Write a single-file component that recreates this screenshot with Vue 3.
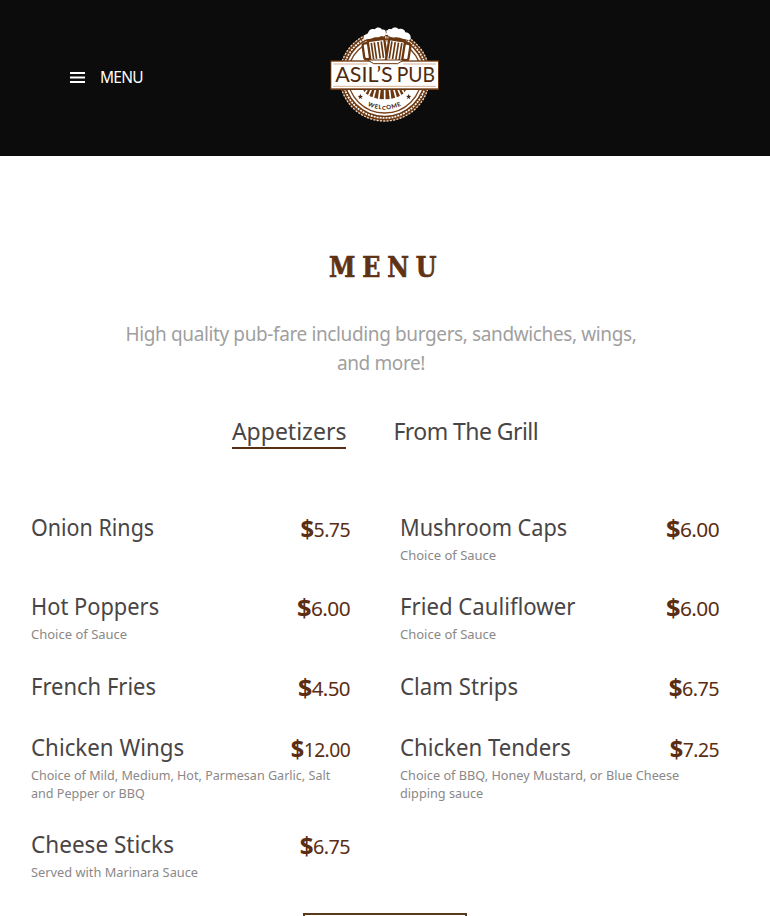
<script setup>
import { ref } from 'vue'

const activeTab = ref('Appetizers')
const tabs = [
  { label: 'Appetizers', spacing: 0 },
  { label: 'From The Grill', spacing: -0.55 },
]

// fit / priceFit / descFit: horizontal squeeze of each text
const items = [
  { name: 'Onion Rings', fit: 0.934, price: '5.75', priceFit: 0.95 },
  { name: 'Mushroom Caps', fit: 0.943, price: '6.00', priceFit: 1.02, desc: 'Choice of Sauce' },
  { name: 'Hot Poppers', fit: 0.95, price: '6.00', priceFit: 1.02, desc: 'Choice of Sauce' },
  { name: 'Fried Cauliflower', fit: 0.964, price: '6.00', priceFit: 1.02, desc: 'Choice of Sauce' },
  { name: 'French Fries', fit: 0.956, price: '4.50', priceFit: 1 },
  { name: 'Clam Strips', fit: 0.965, price: '6.75', priceFit: 0.965 },
  { name: 'Chicken Wings', fit: 0.97, price: '12.00', priceFit: 0.94, desc: 'Choice of Mild, Medium, Hot, Parmesan Garlic, Salt and Pepper or BBQ', descFit: 0.967 },
  { name: 'Chicken Tenders', fit: 0.965, price: '7.25', priceFit: 0.945, desc: 'Choice of BBQ, Honey Mustard, or Blue Cheese dipping sauce', descFit: 0.977 },
  { name: 'Cheese Sticks', fit: 0.98, price: '6.75', priceFit: 0.965, desc: 'Served with Marinara Sauce', descFit: 0.984 },
]
</script>

<template>
  <div class="page">
    <header class="header">
      <button class="menu-btn">
        <svg width="15" height="11" viewBox="0 0 15 11">
          <path d="M0 1h15M0 5.5h15M0 10h15" stroke="#fff" stroke-width="2.2" />
        </svg>
        <span>MENU</span>
      </button>

      <svg class="logo" width="130" height="110" viewBox="0 0 390 330">
        <!-- rope ring -->
        <circle cx="194" cy="168" r="136" fill="#6b3710" />
        <circle cx="194" cy="168" r="135" fill="none" stroke="#e9d8c8" stroke-width="4" stroke-dasharray="6 4" />
        <circle cx="194" cy="168" r="126" fill="none" stroke="#fff" stroke-width="5" stroke-dasharray="6 3" />
        <circle cx="194" cy="168" r="119" fill="#fff" />
        <circle cx="194" cy="168" r="111" fill="none" stroke="#7a4218" stroke-width="4" />
        <!-- sun rays under the banner -->
        <path d="M129 208a66 36 0 0 0 130 0z" fill="#6b3710" />
        <path d="M143 206l-8 14M155 206l-11 25M167 206l-9 34M180 206l-5 42M194 206v44M208 206l5 42M221 206l9 34M233 206l11 25M245 206l8 14" stroke="#fff" stroke-width="5" />
        <!-- mugs -->
        <g transform="rotate(-8 165 90)">
          <rect x="130" y="66" width="22" height="48" rx="7" fill="#fff" stroke="#6b3710" stroke-width="7" />
          <rect x="147" y="50" width="50" height="76" rx="5" fill="#fff" stroke="#6b3710" stroke-width="7" />
          <path d="M147 57h50" stroke="#6b3710" stroke-width="14" />
          <path d="M157 67v50M166 67v50M177 67v50M187 67v50" stroke="#6b3710" stroke-width="5" />
        </g>
        <g transform="rotate(9 230 90)">
          <rect x="245" y="66" width="24" height="50" rx="7" fill="#fff" stroke="#6b3710" stroke-width="7" />
          <rect x="203" y="50" width="48" height="80" rx="5" fill="#fff" stroke="#6b3710" stroke-width="7" />
          <path d="M203 58h48" stroke="#6b3710" stroke-width="14" />
          <path d="M212 67v52M222 67v52M232 67v52M242 67v52" stroke="#6b3710" stroke-width="5" />
        </g>
        <path d="M132 60c-4-9 2-18 11-18 2-13 13-18 21-14 7-8 18-6 22 1 9-2 13 5 11 13 1 7-8 9-13 6-8 6-17 2-24 5-8 5-15 2-28 7z" fill="#fff" />
        <path d="M200 43c-2-12 6-18 14-15 6-8 18-6 22 0 9-4 18 1 20 9 11 0 18 9 16 21-9 5-14-3-22-1-8-5-15-2-21-6-9 4-20 1-29-8z" fill="#fff" />
        <path d="M201 45v20" stroke="#6b3710" stroke-width="3" />
        <!-- banner -->
        <rect x="31" y="121" width="326" height="89" fill="#6b3710" />
        <rect x="34" y="125" width="320" height="80" fill="#fff" />
        <path d="M40 132h103M250 132h98M40 199h308" stroke="#c28c62" stroke-width="2" />
        <path d="M143 120l18 11h72l18-11z" fill="#fff" stroke="#6b3710" stroke-width="3" />
        <text class="logo-name" x="46" y="185" textLength="172" lengthAdjust="spacingAndGlyphs">ASIL’S</text>
        <text class="logo-name" x="230" y="185" textLength="115" lengthAdjust="spacingAndGlyphs">PUB</text>
        <!-- lower label -->
        <path id="welcome-arc" d="M143 257q52 25 110-4" fill="none" />
        <text class="logo-welcome"><textPath href="#welcome-arc">WELCOME</textPath></text>
        <path d="M121 221l2 6 6 1-5 4 2 6-5-4-5 4 2-6-5-4 6-1zM266 221l2 6 6 1-5 4 2 6-5-4-5 4 2-6-5-4 6-1z" fill="#4a2810" />
      </svg>
    </header>

    <main class="content">
      <h1 class="title"><span>MENU</span></h1>
      <p class="intro">High quality pub-fare including burgers, sandwiches, wings, and more!</p>

      <nav class="tabs">
        <button
          v-for="tab in tabs"
          :key="tab.label"
          class="tab"
          :class="{ active: tab.label === activeTab }"
          :style="{ letterSpacing: tab.spacing + 'px' }"
          @click="activeTab = tab.label"
        >{{ tab.label }}</button>
      </nav>

      <div class="menu-list">
        <div v-for="item in items" :key="item.name" class="item">
          <div class="item-head">
            <span class="name" :style="{ transform: `scaleX(${item.fit})` }">{{ item.name }}</span>
            <span class="price" :style="{ transform: `scaleX(${item.priceFit})` }"><b>$</b>{{ item.price }}</span>
          </div>
          <p v-if="item.desc" class="desc" :style="{ transform: `scaleX(${item.descFit || 1})` }">{{ item.desc }}</p>
        </div>
      </div>

      <button class="more-btn"></button>
    </main>
  </div>
</template>

<style>
body {
  background: #fff;
  overflow: hidden;
}
</style>

<style scoped>
.page {
  height: 916px;
  overflow: hidden;
  font-family: "Noto Sans", "Open Sans", sans-serif;
  color: #494545;
}

button {
  border: 0;
  padding: 0;
  background: none;
  font: inherit;
  color: inherit;
}

.header {
  display: grid;
  grid-template-columns: 1fr 130px 1fr;
  height: 156px;
  background: #0c0c0c;
}

.menu-btn {
  display: flex;
  align-items: center;
  align-self: start;
  gap: 15px;
  height: 22px;
  margin: 66px 0 0 70px;
  color: #fff;
  font-size: 15.5px;
  letter-spacing: -0.7px;
}

.logo {
  margin-top: 20px;
}

.logo-name {
  font-family: Lato, sans-serif;
  font-size: 62px;
  fill: #4f2a10;
}

.logo-welcome {
  font-family: Lato, sans-serif;
  font-size: 18px;
  font-weight: 900;
  letter-spacing: 2px;
  fill: #4f2a10;
}

.title {
  margin: 92px 0 0;
  font-family: "DejaVu Serif", serif;
  font-size: 28px;
  line-height: 40px;
  font-weight: bold;
  text-align: center;
  color: #5f3214;
}

.title span {
  display: inline-block;
  letter-spacing: 8px;
  margin-right: -3px;
  transform: scaleX(0.85);
  -webkit-text-stroke: 0.7px #5f3214;
}

.intro {
  width: 540px;
  margin: 32px auto 0 111px;
  font-size: 19px;
  line-height: 29px;
  letter-spacing: -0.38px;
  text-align: center;
  color: #9f9f9f;
}

.tabs {
  display: flex;
  justify-content: center;
  gap: 47px;
  margin-top: 37px;
}

.tab {
  height: 34px;
  font-size: 23px;
  line-height: 32px;
  border-bottom: 2px solid transparent;
}

.tab.active {
  border-bottom-color: #5b2d12;
}

.menu-list {
  display: grid;
  grid-template-columns: 319px 319px;
  column-gap: 50px;
  margin: 61px 0 0 31px;
}

.item {
  padding-bottom: 25.33px;
}

.item-head {
  display: flex;
  justify-content: space-between;
  height: 36px;
}

.name {
  font-size: 23px;
  line-height: 35px;
  transform-origin: left;
}

.price {
  font-size: 20.5px;
  line-height: 39px;
  letter-spacing: -0.6px;
  color: #5b2d12;
  transform-origin: right;
}

.price b {
  font-size: 25px;
  line-height: 1;
  vertical-align: -1px;
}

.desc {
  margin: 0;
  width: 315px;
  font-size: 13px;
  line-height: 18px;
  color: #8a8888;
  transform-origin: left;
}

.more-btn {
  display: block;
  width: 164px;
  height: 50px;
  margin: 6px auto 0;
  border: 2px solid #5a3a1e;
}
</style>
